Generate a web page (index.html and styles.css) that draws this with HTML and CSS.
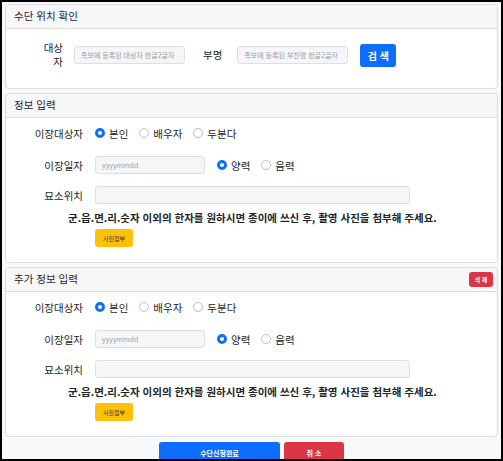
FILE: index.html
```html
<!DOCTYPE html>
<html lang="ko">
<head>
  <meta charset="UTF-8">
  <title>수단 신청</title>
  <link rel="stylesheet" href="styles.css">
</head>
<body>

  <div class="frame">

    <!-- 수단 위치 확인 -->
    <div class="card">
      <div class="card-header">수단 위치 확인</div>
      <div class="card-body search-body">
        <label class="search-label">대상자</label>
        <input type="text" class="field short" placeholder="족보에 등록된 대상자 한글2글자">
        <label class="search-label father">부명</label>
        <input type="text" class="field short" placeholder="족보에 등록된 부친명 한글2글자">
        <button class="btn btn-primary btn-search">검 색</button>
      </div>
    </div>

    <!-- 정보 입력 -->
    <div class="card">
      <div class="card-header">정보 입력</div>
      <div class="card-body form-body">
        <div class="form-row">
          <label class="form-label">이장대상자</label>
          <label class="radio"><input type="radio" name="target1" checked>본인</label>
          <label class="radio"><input type="radio" name="target1">배우자</label>
          <label class="radio"><input type="radio" name="target1">두분다</label>
        </div>
        <div class="form-row">
          <label class="form-label">이장일자</label>
          <input type="text" class="field date" placeholder="yyyymmdd">
          <label class="radio"><input type="radio" name="cal1" checked>양력</label>
          <label class="radio"><input type="radio" name="cal1">음력</label>
        </div>
        <div class="form-row">
          <label class="form-label">묘소위치</label>
          <input type="text" class="field wide">
        </div>
        <p class="note">군.읍.면.리.숫자 이외의 한자를 원하시면 종이에 쓰신 후, 촬영 사진을 첨부해 주세요.</p>
        <button class="btn btn-warning btn-photo">사진첨부</button>
      </div>
    </div>

    <!-- 추가 정보 입력 -->
    <div class="card">
      <div class="card-header">
        추가 정보 입력
        <button class="btn btn-danger btn-remove">삭 제</button>
      </div>
      <div class="card-body form-body">
        <div class="form-row">
          <label class="form-label">이장대상자</label>
          <label class="radio"><input type="radio" name="target2" checked>본인</label>
          <label class="radio"><input type="radio" name="target2">배우자</label>
          <label class="radio"><input type="radio" name="target2">두분다</label>
        </div>
        <div class="form-row">
          <label class="form-label">이장일자</label>
          <input type="text" class="field date" placeholder="yyyymmdd">
          <label class="radio"><input type="radio" name="cal2" checked>양력</label>
          <label class="radio"><input type="radio" name="cal2">음력</label>
        </div>
        <div class="form-row">
          <label class="form-label">묘소위치</label>
          <input type="text" class="field wide">
        </div>
        <p class="note">군.읍.면.리.숫자 이외의 한자를 원하시면 종이에 쓰신 후, 촬영 사진을 첨부해 주세요.</p>
        <button class="btn btn-warning btn-photo">사진첨부</button>
      </div>
    </div>

    <div class="footer">
      <button class="btn btn-primary btn-submit">수단신청완료</button>
      <button class="btn btn-danger btn-cancel">취 소</button>
    </div>

  </div>

</body>
</html>
```

FILE: styles.css
```css
* {
  margin: 0;
  padding: 0;
  box-sizing: border-box;
}

body {
  font-family: "Noto Sans CJK KR", "Noto Sans", sans-serif;
  font-size: 10px;
  color: #212529;
  background-color: #fff;
}

.frame {
  width: 503px;
  height: 461px;
  border: 2px solid #000;
  padding: 2px 3px;
  background-color: #f8f9fa;
  overflow: hidden;
}

/* Cards */
.card {
  background-color: #fff;
  border: 1px solid #dcdcdc;
  border-radius: 4px;
  margin-bottom: 4px;
}

.card-header {
  height: 24px;
  display: flex;
  align-items: center;
  justify-content: space-between;
  padding: 0 4px 0 8px;
  background-color: #f7f7f7;
  border-bottom: 1px solid #dcdcdc;
  border-radius: 4px 4px 0 0;
  font-size: 10.5px;
  line-height: 1;
}

/* Search row */
.search-body {
  display: flex;
  align-items: center;
  padding: 12px 0 19px;
}

.search-label {
  width: 24px;
  margin-left: 33px;
  text-align: right;
  font-size: 10.5px;
  line-height: 14px;
  word-break: break-all;
}

.search-label.father {
  width: auto;
  margin: 0 4px 0 18px;
}

.field {
  height: 18px;
  padding: 0 6px;
  border: 1px solid #dcdfe3;
  border-radius: 3px;
  background-color: #f5f6f8;
  font-family: inherit;
  font-size: 7px;
  color: #212529;
}

.field::placeholder {
  color: #a0a0a0;
}

.field.short {
  width: 111px;
  margin-left: 11px;
}

.field.date {
  width: 110px;
  margin-right: 12px;
}

.field.wide {
  width: 315px;
}

/* Buttons */
.btn {
  border: none;
  border-radius: 3px;
  color: #fff;
  font-family: inherit;
  cursor: pointer;
}

.btn-primary {
  background-color: #0d6efd;
}

.btn-danger {
  background-color: #dc3545;
}

.btn-warning {
  background-color: #ffc107;
  color: #333;
}

.btn-search {
  width: 36px;
  height: 23px;
  margin-left: 12px;
  font-size: 10px;
  font-weight: bold;
}

.btn-remove {
  width: 24px;
  height: 15px;
  font-size: 6px;
  font-weight: bold;
}

.btn-photo {
  display: block;
  width: 38px;
  height: 18px;
  margin-left: 89px;
  font-size: 6px;
}

/* Form rows */
.form-body {
  padding: 6px 0 15px;
}

.form-row {
  display: flex;
  align-items: center;
  height: 18px;
}

.form-row:nth-child(1) {
  margin-bottom: 14px;
}

.form-row:nth-child(2) {
  margin-bottom: 12px;
}

.form-label {
  width: 77px;
  margin-right: 12px;
  text-align: right;
  font-size: 10.5px;
}

.radio {
  display: flex;
  align-items: center;
  margin-right: 11px;
  font-size: 10.5px;
}

.radio input {
  appearance: none;
  width: 10px;
  height: 10px;
  margin-right: 4px;
  border: 1px solid #bfbfbf;
  border-radius: 50%;
  background-color: #fff;
}

.radio input:checked {
  border: 3px solid #0d6efd;
  background-color: #fff;
}

.note {
  margin: 8px 0 5px 62px;
  font-size: 10.5px;
  line-height: 12px;
  font-weight: bold;
  white-space: nowrap;
}

/* Bottom buttons */
.footer {
  display: flex;
  justify-content: center;
  gap: 4px;
  padding-top: 1px;
}

.btn-submit,
.btn-cancel {
  height: 22px;
  font-size: 7px;
  font-weight: bold;
}

.btn-submit {
  width: 121px;
}

.btn-cancel {
  width: 60px;
}
```
